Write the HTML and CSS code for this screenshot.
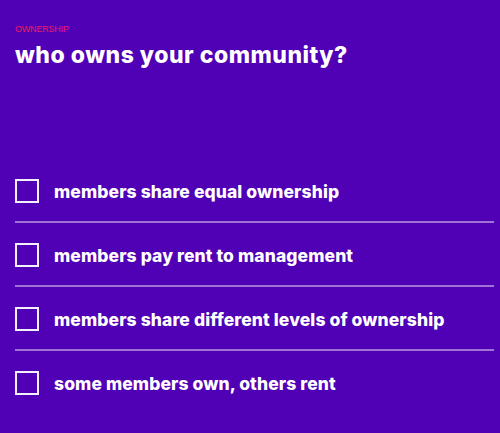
FILE: index.html
```
<!DOCTYPE html>
<html>
<head>
<meta charset="utf-8">
<link rel="stylesheet" href="styles.css">
</head>
<body>
<div class="page">
  <div class="eyebrow">OWNERSHIP</div>
  <h1 class="title">who owns your community?</h1>
  <ul class="options">
    <li class="option"><span class="box"></span><span class="label">members share equal ownership</span></li>
    <li class="option"><span class="box"></span><span class="label">members pay rent to management</span></li>
    <li class="option"><span class="box"></span><span class="label">members share different levels of ownership</span></li>
    <li class="option"><span class="box"></span><span class="label">some members own, others rent</span></li>
  </ul>
</div>
</body>
</html>
```
FILE: styles.css
```
html, body {
  margin: 0;
  padding: 0;
  background: #5000b5;
  height: 100%;
}
.page {
  padding: 24px 6px 0 15px;
  color: #fff;
}
.eyebrow {
  font-family: "Liberation Sans", Arial, sans-serif;
  font-size: 9px;
  line-height: 10px;
  color: #ee1a5e;
  letter-spacing: -0.2px;
}
.title {
  margin: 7px 0 0 0;
  font-family: Inter, "Liberation Sans", sans-serif;
  font-weight: 800;
  font-size: 23px;
  line-height: 28px;
  letter-spacing: 0.5px;
}
.options {
  list-style: none;
  margin: 90px 0 0 0;
  padding: 0;
}
.option {
  display: flex;
  align-items: flex-start;
  gap: 15px;
  padding: 20px 0 17px 0;
  border-bottom: 2px solid rgba(255, 255, 255, 0.45);
}
.option:last-child {
  border-bottom: none;
}
.box {
  width: 20px;
  height: 20px;
  border: 2px solid #f4f0ff;
  flex: none;
}
.label {
  font-family: Inter, "Liberation Sans", sans-serif;
  font-weight: 800;
  font-size: 17.5px;
  line-height: 24px;
  letter-spacing: 0.1px;
  padding-top: 1px;
}
```
